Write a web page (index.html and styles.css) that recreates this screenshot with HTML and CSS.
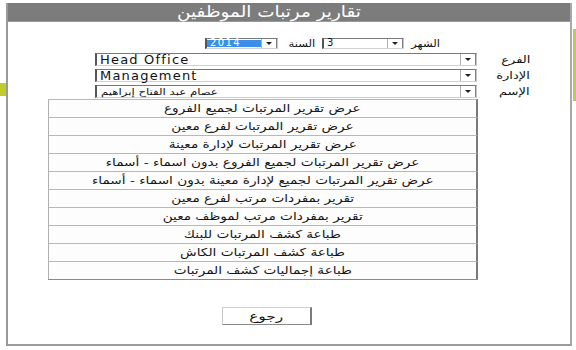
FILE: index.html
```html
<!DOCTYPE html>
<html lang="ar">
<head>
<meta charset="utf-8">
<title>تقارير مرتبات الموظفين</title>
<link rel="stylesheet" href="styles.css">
</head>
<body>
<div class="deco deco-left"></div>
<div class="deco deco-right"></div>
<div class="window">
  <div class="titlebar"><span class="title-text">تقارير مرتبات الموظفين</span></div>
  <div class="content">
    <div class="period-row">
      <div class="select select-year"><span class="value value-selected">2014</span><span class="arrow"><span class="tri"></span></span></div>
      <span class="label label-year"><span class="wide">السنة</span></span>
      <div class="select select-month"><span class="value">3</span><span class="arrow"><span class="tri"></span></span></div>
      <span class="label label-month"><span class="wide">الشهر</span></span>
    </div>
    <div class="fields">
      <div class="field-row">
        <div class="select select-wide"><span class="value value-latin">Head Office</span><span class="arrow"><span class="tri"></span></span></div>
        <span class="label label-field"><span class="wide">الفرع</span></span>
      </div>
      <div class="field-row">
        <div class="select select-wide"><span class="value value-latin">Management</span><span class="arrow"><span class="tri"></span></span></div>
        <span class="label label-field"><span class="wide">الإدارة</span></span>
      </div>
      <div class="field-row">
        <div class="select select-wide"><span class="value value-arabic"><span class="wide">عصام عبد الفتاح إبراهيم</span></span><span class="arrow"><span class="tri"></span></span></div>
        <span class="label label-field"><span class="wide">الإسم</span></span>
      </div>
    </div>
    <div class="btn-list">
      <div class="btn"><span class="wide">عرض تقرير المرتبات لجميع الفروع</span></div>
      <div class="btn"><span class="wide">عرض تقرير المرتبات لفرع معين</span></div>
      <div class="btn"><span class="wide">عرض تقرير المرتبات لإدارة معينة</span></div>
      <div class="btn"><span class="wide">عرض تقرير المرتبات لجميع الفروع بدون اسماء - أسماء</span></div>
      <div class="btn"><span class="wide">عرض تقرير المرتبات لجميع لإدارة معينة بدون اسماء - أسماء</span></div>
      <div class="btn"><span class="wide">تقرير بمفردات مرتب لفرع معين</span></div>
      <div class="btn"><span class="wide">تقرير بمفردات مرتب لموظف معين</span></div>
      <div class="btn"><span class="wide">طباعة كشف المرتبات للبنك</span></div>
      <div class="btn"><span class="wide">طباعة كشف المرتبات الكاش</span></div>
      <div class="btn"><span class="wide">طباعة إجماليات كشف المرتبات</span></div>
    </div>
    <div class="back-row">
      <div class="back-btn"><span class="wide">رجوع</span></div>
    </div>
  </div>
</div>
</body>
</html>
```
FILE: styles.css
```css
html, body {
  margin: 0;
  padding: 0;
  background: #ffffff;
}
body {
  width: 576px;
  height: 350px;
  overflow: hidden;
  position: relative;
  font-family: "DejaVu Sans", sans-serif;
  color: #111;
}
.deco {
  position: absolute;
}
.deco-left {
  left: 0;
  top: 83px;
  width: 6px;
  height: 13px;
  background: #bfcc2e;
}
.deco-right {
  left: 573px;
  top: 29px;
  width: 3px;
  height: 72px;
  background: #c3c75a;
}
.wide {
  display: inline-block;
  transform: scaleX(1.24);
  white-space: nowrap;
}
.window {
  margin-left: 6px;
  margin-top: 3px;
  width: 562px;
  height: 341px;
  border-left: 2px solid #9a9a9a;
  border-right: 2px solid #a8a8a8;
  border-bottom: 2px solid #9a9a9a;
  display: flex;
  flex-direction: column;
}
.titlebar {
  height: 18px;
  background: #7c7c7c;
  border-bottom: 1px solid #9a9a9a;
  display: flex;
  justify-content: center;
  align-items: center;
  padding-right: 40px;
}
.title-text {
  color: #fff;
  font-size: 16px;
  line-height: 16px;
  direction: rtl;
  display: inline-block;
  transform: scaleX(1.15);
}
.content {
  display: flex;
  flex-direction: column;
}
.period-row {
  display: flex;
  align-items: center;
  margin-top: 15px;
  padding-left: 197px;
  height: 12px;
}
.select {
  box-sizing: border-box;
  display: flex;
  align-items: stretch;
  background: #fff;
  border-top: 1px solid #7a7a7a;
  border-left: 2px solid #555;
  border-right: 1px solid #c8c8c8;
  border-bottom: 1px solid #d0d0d0;
}
.value {
  flex: 1;
  display: flex;
  align-items: center;
  padding-left: 3px;
  white-space: nowrap;
  line-height: 10px;
  min-width: 0;
}
.value-selected {
  background: #3b8fe8;
  color: #fff;
  font-size: 10px;
  letter-spacing: 1.4px;
  margin: 1px 0;
  line-height: 8px;
}
.arrow {
  flex: 0 0 14px;
  border-left: 1px solid #b0b0b0;
  border-right: 1px solid #808080;
  display: flex;
  align-items: center;
  justify-content: center;
  background: #fff;
}
.tri {
  width: 0;
  height: 0;
  border-left: 3px solid transparent;
  border-right: 3px solid transparent;
  border-top: 3px solid #222;
}
.select-year {
  width: 73px;
  height: 11px;
}
.select-month {
  width: 82px;
  height: 11px;
  font-size: 10px;
}
.label {
  font-size: 10px;
  white-space: nowrap;
  direction: rtl;
  text-align: right;
}
.label .wide {
  transform: scaleX(1.3);
  transform-origin: right center;
}
.period-row .label .wide {
  transform: scaleX(1.15);
}
.label-year {
  width: 37px;
  padding-right: 7px;
}
.label-month {
  width: 36px;
}
.fields {
  display: flex;
  flex-direction: column;
  gap: 3px;
  margin-top: 4px;
}
.field-row {
  display: flex;
  align-items: center;
  padding-left: 87px;
  height: 13px;
}
.select-wide {
  width: 382px;
  height: 13px;
}
.value-latin {
  font-size: 13px;
  line-height: 11px;
  letter-spacing: 1.2px;
}
.value-arabic {
  font-size: 9px;
  padding-left: 4px;
}
.value-arabic .wide {
  transform-origin: left center;
  transform: scaleX(1.3);
}
.label-field {
  width: 53px;
  font-size: 10px;
}
.btn-list {
  margin-top: 1px;
  margin-left: 40px;
  width: 430px;
  display: flex;
  flex-direction: column;
  border-bottom: 1px solid #8a8a8a;
}
.btn {
  box-sizing: border-box;
  height: 18px;
  border-top: 1px solid #b8b8b8;
  border-left: 1px solid #b0b0b0;
  border-right: 2px solid #7a7a7a;
  background: #fdfdfd;
  display: flex;
  align-items: center;
  justify-content: center;
  font-size: 11px;
  color: #151515;
  direction: rtl;
  white-space: nowrap;
}
.back-row {
  display: flex;
  padding-left: 214px;
  margin-top: 27px;
}
.back-btn {
  box-sizing: border-box;
  width: 90px;
  height: 18px;
  background: #fff;
  border-top: 1px solid #d0d0d0;
  border-left: 1px solid #c8c8c8;
  border-right: 2px solid #7a7a7a;
  border-bottom: 1px solid #8a8a8a;
  display: flex;
  align-items: center;
  justify-content: center;
  font-size: 11px;
  direction: rtl;
}
.back-btn .wide {
  transform: scaleX(1.4);
}
```
